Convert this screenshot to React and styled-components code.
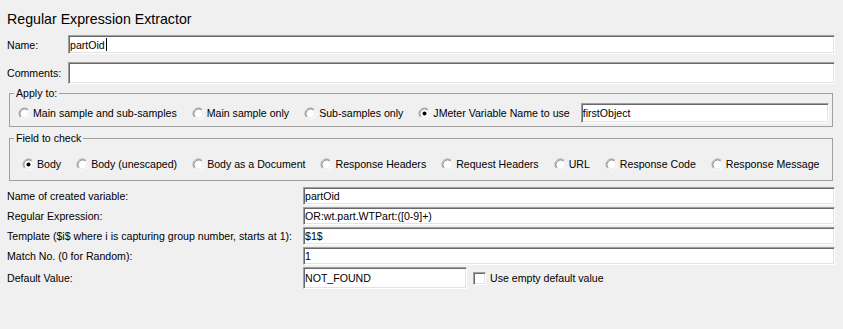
import React from 'react';
import styled, { createGlobalStyle } from 'styled-components';

const Global = createGlobalStyle`
  html, body { margin: 0; padding: 0; background: #f0f0f0; }
  body {
    font-family: "Liberation Sans", Arial, sans-serif;
    font-size: 10.6px;
    color: #000;
  }
  #root { width: 843px; height: 329px; overflow: hidden; }
`;

const Page = styled.div`
  display: flex;
  flex-direction: column;
  padding: 0 8px 0 7px;
`;

const Title = styled.h1`
  margin: 11px 0 0;
  font-size: 14.2px;
  font-weight: normal;
  line-height: 17px;
`;

const LabeledRow = styled.div`
  display: grid;
  grid-template-columns: 61px 1fr;
  align-items: center;
  margin-top: ${(p) => p.$top}px;
`;

const Label = styled.span`
  white-space: nowrap;
  line-height: 14px;
`;

const Field = styled.div`
  box-sizing: border-box;
  height: ${(p) => p.$h}px;
  width: ${(p) => (p.$w ? `${p.$w}px` : 'auto')};
  flex: ${(p) => (p.$w ? 'none' : '1 1 auto')};
  min-width: 0;
  background: #fff;
  border: 1px solid;
  border-color: #a0a0a0 #ffffff #ffffff #a0a0a0;
  box-shadow: inset 1px 1px 0 #696969, inset -1px -1px 0 #e3e3e3;
  padding: 0 1px;
  display: flex;
  align-items: center;
  white-space: nowrap;
  overflow: hidden;
`;

const Caret = styled.span`
  display: inline-block;
  width: 1px;
  height: 13px;
  background: #000;
  margin-left: 1px;
`;

const Group = styled.fieldset`
  margin: ${(p) => p.$top}px 2px 0 2px;
  padding: 0;
  border: 1px solid #a0a0a0;
  min-width: 0;
`;

const Legend = styled.legend`
  margin-left: 4px;
  padding: 0 2px;
  line-height: 14px;
`;

const RadioRow = styled.div`
  display: flex;
  align-items: center;
  gap: 15px;
  padding: ${(p) => p.$pad};
`;

const RadioItem = styled.label`
  display: inline-flex;
  align-items: center;
  gap: 2px;
  white-space: nowrap;
  line-height: 14px;
`;

const FieldPair = styled.div`
  display: flex;
  align-items: center;
  gap: 11px;
  flex: 1 1 auto;
  min-width: 0;
`;

const FormGrid = styled.div`
  display: grid;
  grid-template-columns: 296px 1fr;
  row-gap: 2px;
  align-items: center;
  margin-top: 6px;
`;

const Inline = styled.div`
  display: flex;
  align-items: center;
`;

const CheckItem = styled.label`
  display: inline-flex;
  align-items: center;
  gap: 4px;
  margin-left: 6px;
  white-space: nowrap;
  line-height: 14px;
`;

const Box = styled.span`
  box-sizing: border-box;
  width: 13px;
  height: 13px;
  background: #fff;
  border: 1px solid;
  border-color: #a0a0a0 #ffffff #ffffff #a0a0a0;
  box-shadow: inset 1px 1px 0 #696969, inset -1px -1px 0 #e3e3e3;
`;

const RadioIcon = ({ checked }) => (
  <svg width="13" height="13" viewBox="0 0 13 13" style={{ flex: 'none' }}>
    <circle cx="6.5" cy="6.5" r="5.5" fill="#fff" />
    <path d="M2.61 10.39 A5.5 5.5 0 0 1 10.39 2.61" fill="none" stroke="#a0a0a0" strokeWidth="1" />
    <path d="M10.39 2.61 A5.5 5.5 0 0 1 2.61 10.39" fill="none" stroke="#ffffff" strokeWidth="1" />
    <path d="M3.32 9.68 A4.5 4.5 0 0 1 9.68 3.32" fill="none" stroke="#8a8a8a" strokeWidth="1" />
    <path d="M9.68 3.32 A4.5 4.5 0 0 1 3.32 9.68" fill="none" stroke="#e3e3e3" strokeWidth="1" />
    {checked && <circle cx="6.5" cy="6.5" r="2" fill="#000" />}
  </svg>
);

const Radio = ({ checked, children }) => (
  <RadioItem>
    <RadioIcon checked={checked} />
    <span>{children}</span>
  </RadioItem>
);

const applyOptions = ['Main sample and sub-samples', 'Main sample only', 'Sub-samples only'];
const fieldOptions = [
  'Body',
  'Body (unescaped)',
  'Body as a Document',
  'Response Headers',
  'Request Headers',
  'URL',
  'Response Code',
  'Response Message',
];

const rows = [
  ['Name of created variable:', 'partOid'],
  ['Regular Expression:', 'OR:wt.part.WTPart:([0-9]+)'],
  ['Template ($i$ where i is capturing group number, starts at 1):', '$1$'],
  ['Match No. (0 for Random):', '1'],
];

export default function App() {
  return (
    <>
      <Global />
      <Page>
        <Title>Regular Expression Extractor</Title>
        <LabeledRow $top={7}>
          <Label>Name:</Label>
          <Field $h={19}>
            <span>partOid</span>
            <Caret />
          </Field>
        </LabeledRow>
        <LabeledRow $top={8}>
          <Label>Comments:</Label>
          <Field $h={22} />
        </LabeledRow>

        <Group $top={2}>
          <Legend>Apply to:</Legend>
          <RadioRow $pad="3px 3px 3px 8px">
            {applyOptions.map((o) => (
              <Radio key={o}>{o}</Radio>
            ))}
            <FieldPair>
              <Radio checked>JMeter Variable Name to use</Radio>
              <Field $h={20}>firstObject</Field>
            </FieldPair>
          </RadioRow>
        </Group>

        <Group $top={4}>
          <Legend>Field to check</Legend>
          <RadioRow $pad="12px 0 9px 12px">
            {fieldOptions.map((o, i) => (
              <Radio key={o} checked={i === 0}>
                {o}
              </Radio>
            ))}
          </RadioRow>
        </Group>

        <FormGrid>
          {rows.map(([label, value]) => (
            <React.Fragment key={label}>
              <Label>{label}</Label>
              <Field $h={18}>{value}</Field>
            </React.Fragment>
          ))}
          <Label>Default Value:</Label>
          <Inline>
            <Field $h={22} $w={164}>NOT_FOUND</Field>
            <CheckItem>
              <Box />
              <span>Use empty default value</span>
            </CheckItem>
          </Inline>
        </FormGrid>
      </Page>
    </>
  );
}
